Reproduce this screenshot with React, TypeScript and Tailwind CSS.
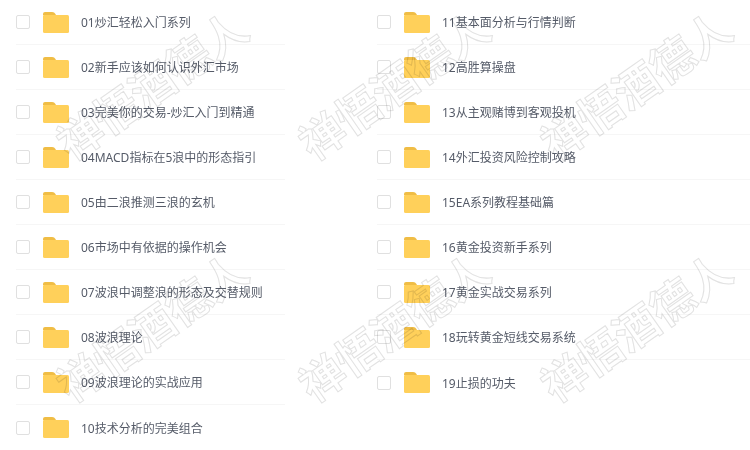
import React from "react";

const leftItems = [
  "01炒汇轻松入门系列",
  "02新手应该如何认识外汇市场",
  "03完美你的交易-炒汇入门到精通",
  "04MACD指标在5浪中的形态指引",
  "05由二浪推测三浪的玄机",
  "06市场中有依据的操作机会",
  "07波浪中调整浪的形态及交替规则",
  "08波浪理论",
  "09波浪理论的实战应用",
  "10技术分析的完美组合",
];

const rightItems = [
  "11基本面分析与行情判断",
  "12高胜算操盘",
  "13从主观赌博到客观投机",
  "14外汇投资风险控制攻略",
  "15EA系列教程基础篇",
  "16黄金投资新手系列",
  "17黄金实战交易系列",
  "18玩转黄金短线交易系统",
  "19止损的功夫",
];

const Folder = () => (
  <svg width="26" height="21" viewBox="0 0 26 21" className="shrink-0">
    <path d="M0 2a2 2 0 0 1 2-2h7c2 0 3 1 4 3h-13z" fill="#f0bd45" />
    <path d="M0 4a1 1 0 0 1 1-1h23.5a1.5 1.5 0 0 1 1.5 1.5v15a1.5 1.5 0 0 1-1.5 1.5h-23a1.5 1.5 0 0 1-1.5-1.5z" fill="#ffd05a" />
  </svg>
);

const Row = ({ title, last }: { title: string; last?: boolean }) => (
  <div className={`flex h-[45px] items-center gap-3 ${last ? "" : "border-b border-[#f6f6f6]"}`}>
    <span className="w-[14px] h-[14px] mr-px shrink-0 border border-[#e0e0e0] rounded-[2px] bg-white"></span>
    <Folder />
    <span className="pt-[2px] text-xs text-[#555b68] whitespace-nowrap">{title}</span>
  </div>
);

const Mark = () => (
  <div className="whitespace-nowrap text-[44px] font-bold leading-none text-transparent [-webkit-text-stroke:1px_#e2e2e2] rotate-[-35deg]">
    禅悟酒德人
  </div>
);

export default function App() {
  return (
    <div className="relative w-[750px] h-[450px] overflow-hidden bg-white font-['Noto_Sans','Noto_Sans_CJK_SC',sans-serif]">
      <div className="flex">
        <div className="w-[285px] pl-4">
          {leftItems.map((t, i) => (
            <Row key={t} title={t} last={i === leftItems.length - 1} />
          ))}
        </div>
        <div className="ml-[75px] flex-1 pl-[17px]">
          {rightItems.map((t, i) => (
            <Row key={t} title={t} last={i === rightItems.length - 1} />
          ))}
        </div>
      </div>
      {/* watermark sits over the list */}
      <div className="absolute left-[31px] top-[-36px] grid grid-cols-[repeat(3,242px)] grid-rows-[repeat(2,242px)] place-items-center mix-blend-multiply pointer-events-none">
        <Mark />
        <Mark />
        <Mark />
        <Mark />
        <Mark />
        <Mark />
      </div>
    </div>
  );
}
